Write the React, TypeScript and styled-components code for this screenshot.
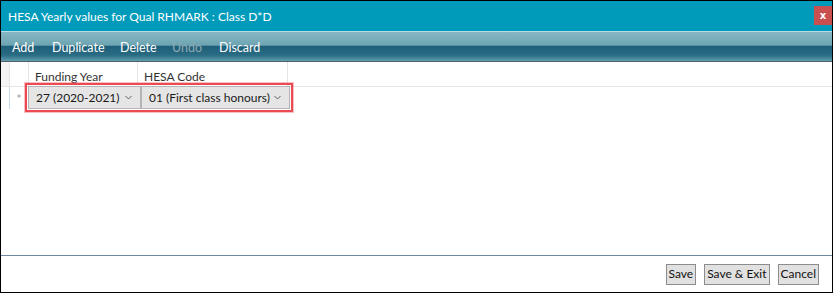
import React from 'react'
import styled, { createGlobalStyle } from 'styled-components'

const GlobalStyle = createGlobalStyle`
  html, body {
    margin: 0;
    padding: 0;
    background: #ffffff;
  }
  body {
    font-family: Lato, 'Open Sans', sans-serif;
  }
`

const Window = styled.div`
  box-sizing: border-box;
  width: 833px;
  height: 293px;
  border: 1px solid #000000;
  display: flex;
  flex-direction: column;
  background: #ffffff;
`

const TitleBar = styled.div`
  height: 30px;
  background: #009bbb;
  display: flex;
  align-items: center;
  justify-content: space-between;
  padding-left: 7px;
  color: #ffffff;
  font-size: 12px;
`

const CloseButton = styled.div`
  width: 18px;
  height: 19px;
  margin-top: -2px;
  background: #c9504f;
  color: #ffffff;
  font-family: 'DejaVu Sans', sans-serif;
  font-weight: bold;
  font-size: 10px;
  display: flex;
  align-items: center;
  justify-content: center;
`

const Toolbar = styled.div`
  height: 29px;
  border-top: 1px solid #b8dde4;
  border-bottom: 1px solid #55606a;
  background: linear-gradient(
    to bottom,
    #86b7c2 0%,
    #6ea5b3 45%,
    #1f5f79 50%,
    #2a6c84 80%,
    #5d9eaf 100%
  );
  display: flex;
  align-items: center;
  padding-left: 11px;
`

const ToolButton = styled.span<{ $disabled?: boolean; $width: number }>`
  width: ${p => p.$width}px;
  color: ${p => (p.$disabled ? '#8fa9b3' : '#ffffff')};
  font-size: 12.5px;
  padding-top: 1px;
`

const GridArea = styled.div`
  flex: 1;
  border-bottom: 1px solid #7088a0;
`

const Row = styled.div<{ $height: number; $line: string }>`
  display: flex;
  height: ${p => p.$height}px;
  border-bottom: 1px solid ${p => p.$line};
`

const Cell = styled.div<{ $width: number; $bg?: string; $line?: string }>`
  box-sizing: border-box;
  width: ${p => p.$width}px;
  background: ${p => p.$bg ?? 'transparent'};
  border-right: 1px solid ${p => p.$line ?? '#e4e4e4'};
  display: flex;
  align-items: center;
  font-size: 12px;
  color: #222222;
`

const HeaderText = styled.span`
  padding-left: 6px;
  padding-top: 4px;
  color: #333333;
  white-space: nowrap;
`

const Marker = styled.span`
  font-family: 'DejaVu Sans', sans-serif;
  font-size: 8px;
  color: #8a8a8a;
  width: 100%;
  text-align: center;
  padding-top: 1px;
`

const Highlight = styled.div`
  display: flex;
  margin-left: -4px;
  margin-top: -4px;
  margin-bottom: -4px;
  border: 2px solid #ea4a52;
  box-shadow: 0 0 0 1px rgba(234, 74, 82, 0.35);
  padding: 1px;
  height: 23px;
`

const Combo = styled.div<{ $width: number }>`
  box-sizing: border-box;
  flex: 0 0 ${p => p.$width}px;
  min-width: 0;
  height: 23px;
  background: #e5e5e5;
  border: 1px solid #b4b4b4;
  display: flex;
  align-items: center;
  justify-content: space-between;
  padding: 0 8px 0 7px;
  font-size: 12px;
  color: #1a1a1a;
  white-space: nowrap;
  overflow: hidden;
`

const Chevron = () => (
  <svg width="7" height="5" viewBox="0 0 7 5">
    <path d="M0.5 1 L3.5 4 L6.5 1" fill="none" stroke="#606060" strokeWidth="1" />
  </svg>
)

const Footer = styled.div`
  height: 36px;
  display: flex;
  justify-content: flex-end;
  align-items: center;
  gap: 8px;
  padding-right: 13px;
`

const Button = styled.button`
  height: 21px;
  padding: 0 2px;
  background: #e1e1e1;
  border: 1px solid #8c8c8c;
  border-radius: 0;
  font-family: Lato, 'Open Sans', sans-serif;
  font-size: 12px;
  color: #111111;
  line-height: 18px;
`

const tools = [
  { label: 'Add', width: 40 },
  { label: 'Duplicate', width: 68 },
  { label: 'Delete', width: 52 },
  { label: 'Undo', width: 47, disabled: true },
  { label: 'Discard', width: 60 },
]

export default function App() {
  return (
    <>
      <GlobalStyle />
      <Window>
        <TitleBar>
          <span>HESA Yearly values for Qual RHMARK : Class D*D</span>
          <CloseButton>x</CloseButton>
        </TitleBar>
        <Toolbar>
          {tools.map(t => (
            <ToolButton key={t.label} $disabled={t.disabled} $width={t.width}>
              {t.label}
            </ToolButton>
          ))}
        </Toolbar>
        <GridArea>
          <Row $height={24} $line="#e4e4e4">
            <Cell $width={9} $bg="#f4f4f4" />
            <Cell $width={19} />
            <Cell $width={109}>
              <HeaderText>Funding Year</HeaderText>
            </Cell>
            <Cell $width={150}>
              <HeaderText>HESA Code</HeaderText>
            </Cell>
          </Row>
          <Row $height={22} $line="#ffffff">
            <Cell $width={9} $line="#c6dcef" />
            <Cell $width={19} $line="#ffffff">
              <Marker>*</Marker>
            </Cell>
            <Highlight>
              <Combo $width={113}>
                27 (2020-2021)
                <Chevron />
              </Combo>
              <Combo $width={149}>
                01 (First class honours)
                <Chevron />
              </Combo>
            </Highlight>
          </Row>
        </GridArea>
        <Footer>
          <Button>Save</Button>
          <Button>Save &amp; Exit</Button>
          <Button>Cancel</Button>
        </Footer>
      </Window>
    </>
  )
}
